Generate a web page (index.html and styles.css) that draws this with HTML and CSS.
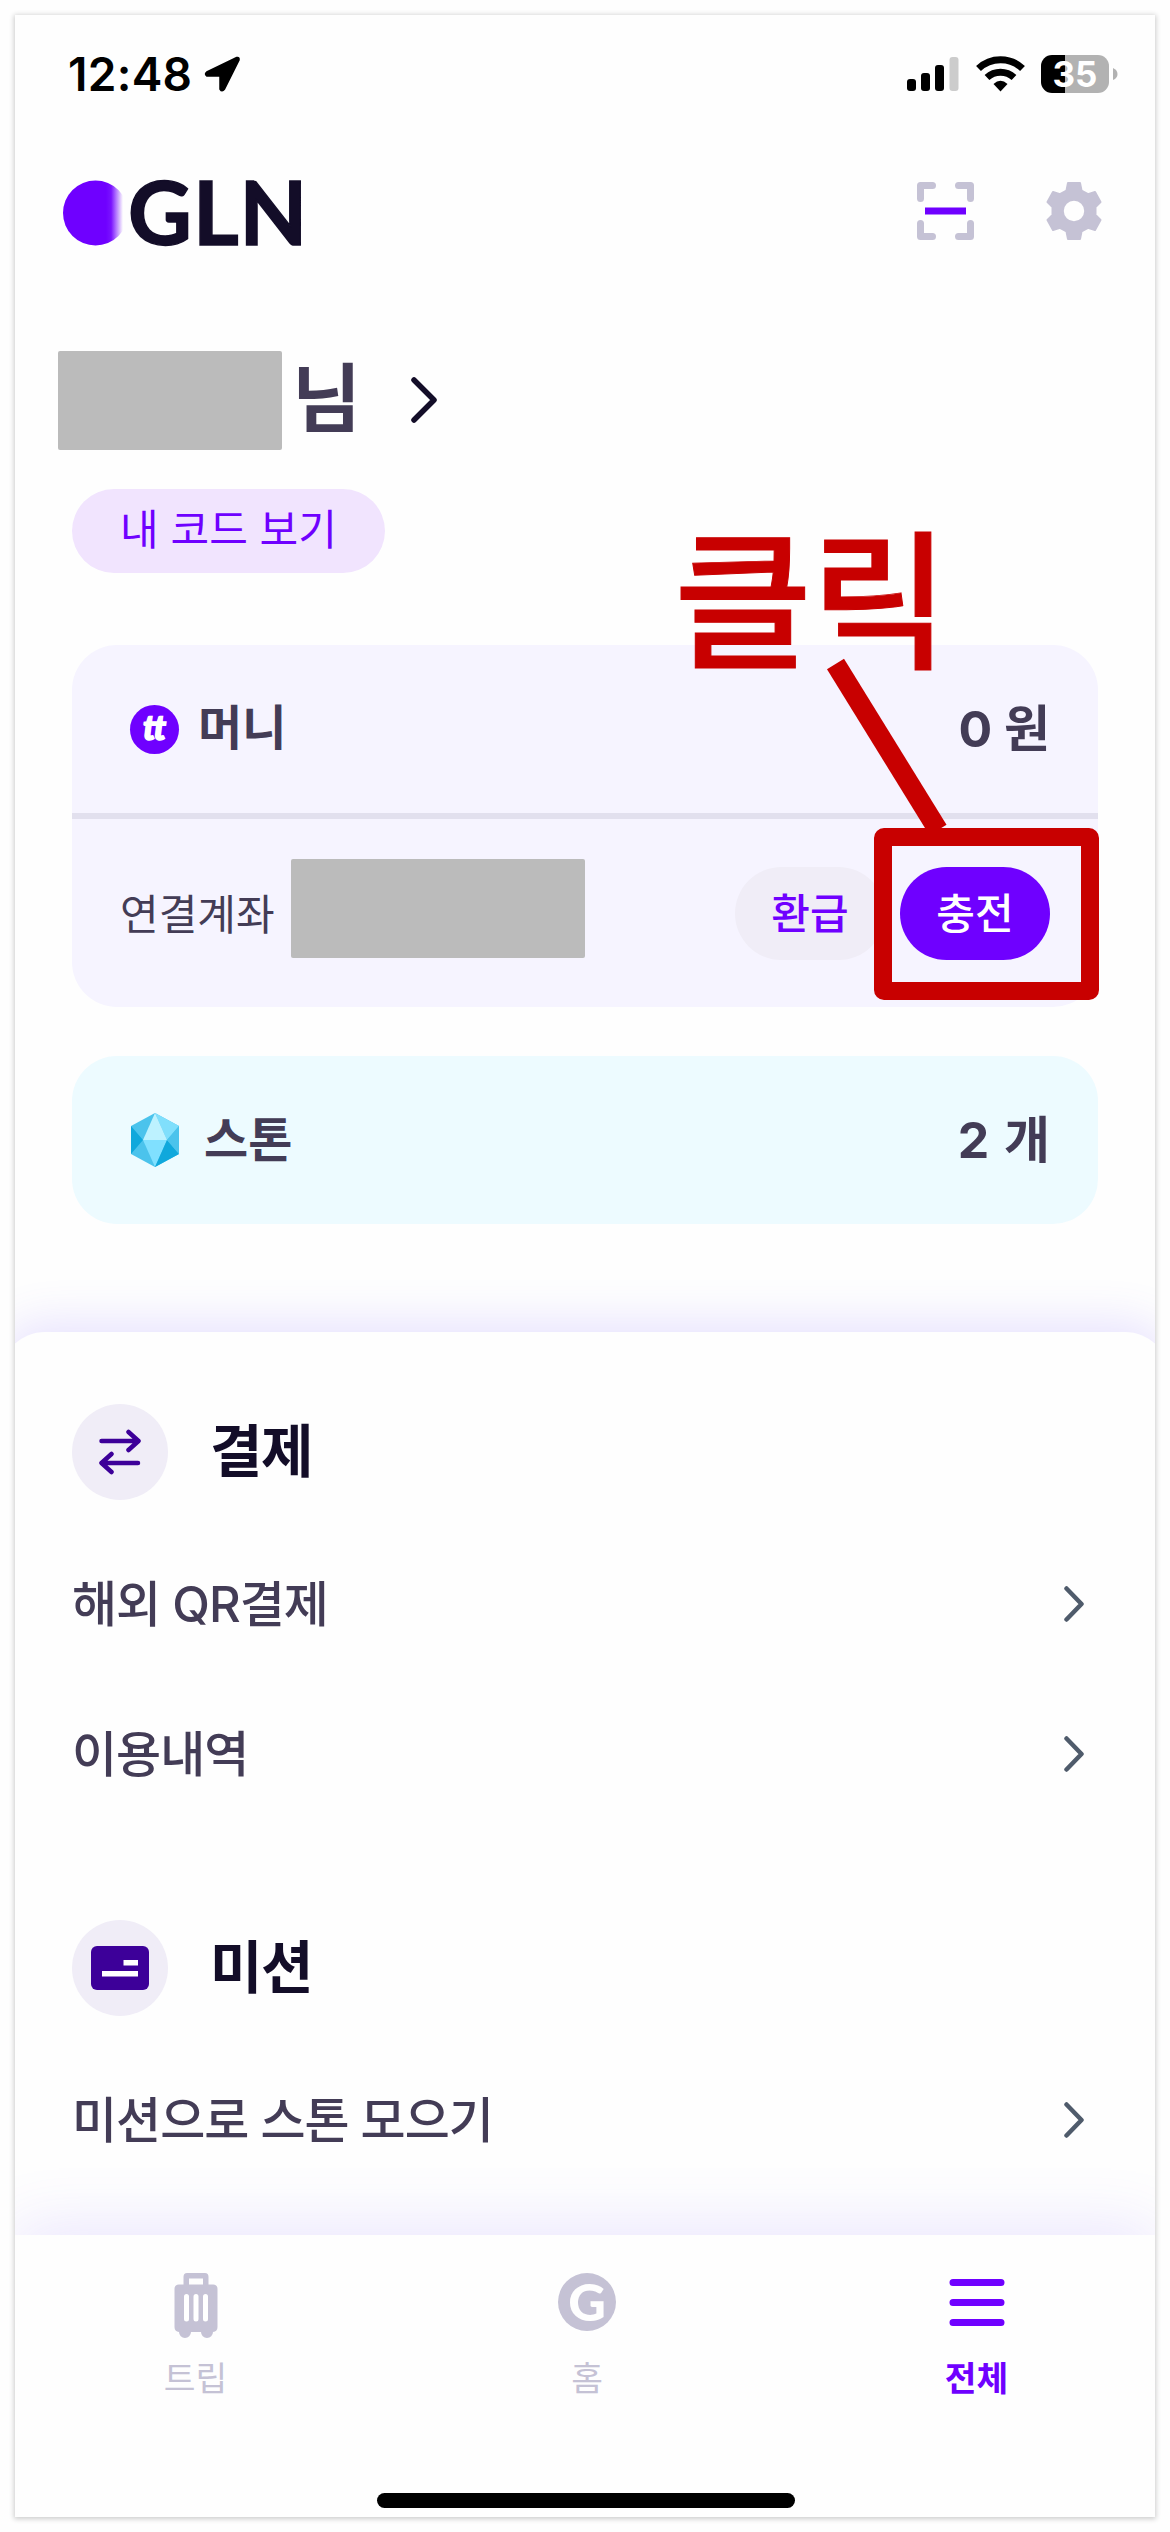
FILE: index.html
```html
<!DOCTYPE html>
<html lang="ko">
<head>
<meta charset="utf-8">
<title>GLN</title>
<link rel="stylesheet" href="styles.css">
</head>
<body>
<div class="screen">
  <div class="status">
    <div class="status-left">
      <span class="time">12:48</span>
      <svg class="location" width="37" height="37" viewBox="0 0 37 37"><path d="M33 2 3 16.500Q1 18 3 19.500H16.500V33Q18 35.500 20 33L34.500 4Q35 1.500 33 2Z" fill="#000" stroke="#000" stroke-width="2.500" stroke-linejoin="round"/></svg>
    </div>
    <div class="status-right">
      <svg width="52" height="38" viewBox="0 0 52 38"><rect y="24" width="9" height="12" rx="3"/><rect x="14" y="18" width="9" height="18" rx="3"/><rect x="28" y="10" width="9" height="26" rx="3"/><rect x="42.500" y="2" width="9" height="34" rx="3" fill="#ccc"/></svg>
      <svg width="49" height="38" viewBox="0 0 49 38"><g fill="none" stroke="#000" stroke-width="7"><path d="M2.500 13.500A32 32 0 0 1 46.500 13.500"/><path d="M11 22.500A20 20 0 0 1 38 22.500"/></g><path d="M17.500 29Q24.500 22.500 31.500 29L24.500 36.500Z"/></svg>
      <div class="battery"><div class="battery-body">35</div><svg width="5" height="12" viewBox="0 0 5 12"><path d="M0 0Q4.500 2 4.500 6T0 12Z" fill="#b2b2b2"/></svg></div>
    </div>
  </div>

  <header class="topbar">
    <div class="logo">
      <svg width="65" height="66" viewBox="0 0 65 66">
        <defs><linearGradient id="fade" gradientUnits="userSpaceOnUse" x1="43" y1="0" x2="60" y2="0"><stop offset="0" stop-color="#6f00ff"/><stop offset=".3" stop-color="#6f00ff" stop-opacity=".93"/><stop offset="1" stop-color="#6f00ff" stop-opacity="0"/></linearGradient></defs>
        <circle cx="32.500" cy="33" r="32.500" fill="url(#fade)"/>
      </svg>
      <span class="logo-text">GLN</span>
    </div>
    <div class="tools">
      <svg width="57" height="58" viewBox="0 0 57 58" fill="none" stroke-width="7"><path d="M3.500 16.500V3.500H15.500M41.500 3.500H53.500V16.500M53.500 41.500V54.500H41.500M15.500 54.500H3.500V41.500" stroke="#c5c2d5" stroke-linecap="round" stroke-linejoin="round"/><path d="M8 29H49" stroke="#6f00ff"/></svg>
      <svg width="56" height="58" viewBox="0 0 56 58"><path fill="#c5c2d5" stroke="#c5c2d5" stroke-width="2" stroke-linejoin="round" fill-rule="evenodd" d="M22 1H34L35.500 8.500 42 12.200 49 10 54.500 20 49.500 25V33L54.500 38 49 48 42 45.800 35.500 49.500 34 57H22L20.500 49.500 14 45.800 7 48 1.500 38 6.500 33V25L1.500 20 7 10 14 12.200 20.500 8.500ZM28 17.800A11.200 11.200 0 1 0 28 40.200 11.200 11.200 0 1 0 28 17.800Z"/></svg>
    </div>
  </header>

  <section class="profile">
    <div class="name-row">
      <div class="mask mask-name"></div>
      <span class="suffix">님</span>
      <svg width="28" height="48" viewBox="0 0 28 48"><path d="M4 3 24 23 4 43" class="chev chev-dark"/></svg>
    </div>
    <div class="code-pill">내 코드 보기</div>
  </section>

  <section class="card money">
    <div class="card-row">
      <span class="coin">tt</span>
      <span class="card-label">머니</span>
      <span class="amount">0 원</span>
    </div>
    <div class="account">
      <span class="account-label">연결계좌</span>
      <div class="mask mask-account"></div>
      <span class="btn btn-light">환급</span>
      <span class="btn btn-fill">충전</span>
    </div>
  </section>

  <section class="card stone">
    <div class="card-row">
      <svg width="50" height="56" viewBox="0 0 50 56"><path d="M25 1 49 14V42L25 55 1 42V14Z" fill="#4bc3ec"/><path d="M25 1 49 14 37 28Z" fill="#80dffc"/><path d="M25 1 37 28H13Z" fill="#bdf2ff"/><path d="M13 28H37L25 55Z" fill="#80e0ff"/><path d="M1 14 13 28 1 42ZM37 28 49 42 25 55Z" fill="#10a8dc"/><path d="M37 28 49 14V42Z" fill="#4bc3ec"/></svg>
      <span class="card-label">스톤</span>
      <span class="amount amount-stone">2 개</span>
    </div>
  </section>

  <main class="sheet">
    <div class="group-title">
      <span class="badge"><svg width="42" height="46" viewBox="0 0 42 46" fill="none" stroke="#3d0099" stroke-width="4.500" stroke-linecap="round" stroke-linejoin="round"><path d="M2.500 12H39M29.500 3 39.500 12 29.500 21M39 34H3M12.500 25 2.500 34 12.500 43"/></svg></span>
      <h2>결제</h2>
    </div>
    <div class="item"><span>해외 QR결제</span><svg width="20" height="36" viewBox="0 0 20 36"><path d="M2.500 2.500 17.500 18 2.500 33.500" class="chev"/></svg></div>
    <div class="item"><span>이용내역</span><svg width="20" height="36" viewBox="0 0 20 36"><path d="M2.500 2.500 17.500 18 2.500 33.500" class="chev"/></svg></div>
    <div class="group-title second">
      <span class="badge"><svg width="58" height="44" viewBox="0 0 58 44"><rect width="58" height="44" rx="6" fill="#3d0099"/><path d="M32.500 14H47V19.500H32.500ZM11 25H47V30.500H11Z" fill="#fff"/></svg></span>
      <h2>미션</h2>
    </div>
    <div class="item mission"><span>미션으로 스톤 모으기</span><svg width="20" height="36" viewBox="0 0 20 36"><path d="M2.500 2.500 17.500 18 2.500 33.500" class="chev"/></svg></div>
  </main>

  <nav class="tabs">
    <div class="tab"><svg width="44" height="66" viewBox="0 0 44 66"><path fill="#c5c2d5" fill-rule="evenodd" d="M9.500 11.500V4Q9.500 0 13 0H31Q34.500 0 34.500 4V11.500H39Q43.500 11.500 43.500 16V54Q43.500 58.500 39 59A6 6 0 0 1 27 59H17A6 6 0 0 1 5 59Q.5 58.500.5 54V16Q.5 11.500 5 11.500ZM15 5.500V11.500H29V5.500Z"/><path d="M12.500 23.500V46M22 23.500V46M31.500 23.500V46" stroke="#fff" stroke-width="5" stroke-linecap="round"/></svg><span>트립</span></div>
    <div class="tab"><div class="home-icon">G</div><span>홈</span></div>
    <div class="tab active"><svg width="56" height="66" viewBox="0 0 56 66"><path d="M4 9.500H52M4 29.500H52M4 49.500H52" stroke="#6f00ff" stroke-width="7" stroke-linecap="round"/></svg><span>전체</span></div>
    <div class="home-indicator"></div>
  </nav>

  <div class="callout">
    <span class="callout-text">클릭</span>
    <svg class="callout-line" width="140" height="190" viewBox="0 0 140 190"><path d="M14.500 14 117 180" stroke="#c80000" stroke-width="20"/></svg>
    <div class="callout-box"></div>
  </div>
</div>
</body>
</html>
```
FILE: styles.css
```css
* { box-sizing: border-box; }

body {
  margin: 0;
  width: 1170px;
  height: 2532px;
  padding: 15px 15px 0;
  background: #fefefe;
  font-family: Inter, "Noto Sans CJK KR", sans-serif;
  color: #433c56;
  overflow: hidden;
}

svg { display: block; flex: none; }

.screen {
  position: relative;
  width: 1140px;
  height: 2502px;
  display: flex;
  flex-direction: column;
  background: #fefefe;
  box-shadow: 0 1px 5px 1px rgba(0, 0, 0, .2);
  overflow: hidden;
}

.status {
  height: 119px;
  padding: 40px 37px 0 53px;
  display: flex;
  justify-content: space-between;
}
.status-left { display: flex; gap: 12px; height: 38px; align-items: center; }
.time { font-size: 46px; font-weight: 600; line-height: 38px; width: 124px; letter-spacing: .3px; color: #000; white-space: nowrap; }
.status-right { display: flex; gap: 16.5px; height: 38px; }
.battery { display: flex; align-items: center; gap: 4px; }
.battery-body {
  width: 68px;
  height: 38px;
  border-radius: 11px;
  background: linear-gradient(90deg, #000 24px, #b2b2b2 24px);
  color: #fff;
  font-size: 35px;
  font-weight: 700;
  line-height: 38px;
  text-align: center;
}

.topbar {
  height: 178px;
  padding: 44px 53px 0 48px;
  display: flex;
  justify-content: space-between;
}
.logo { display: flex; align-items: center; height: 70px; }
.logo-text {
  font-family: Lato, sans-serif;
  font-size: 88px;
  font-weight: 700;
  line-height: 106px;
  letter-spacing: 1px;
  padding-bottom: 4px;
  color: #130d28;
  -webkit-text-stroke: 1.5px #130d28;
}
.tools { display: flex; gap: 72px; padding-top: 4px; }

.profile { height: 333px; padding: 39px 43px 0; }
.name-row { display: flex; align-items: center; height: 99px; }
.mask { background: #bbb; border-radius: 2px; flex: none; }
.mask-name { width: 224px; height: 99px; }
.suffix { font-size: 75px; font-weight: 700; line-height: 95px; height: 99px; width: 73px; margin: 0 45px 0 10px; }
.chev { fill: none; stroke: #4f5b6b; stroke-width: 4.500px; stroke-linecap: round; stroke-linejoin: round; }
.chev-dark { stroke: #130d28; stroke-width: 5.500px; }
.code-pill {
  width: 313px;
  height: 84px;
  margin: 39px 0 0 14px;
  border-radius: 42px;
  background: #f1e4fe;
  color: #6f00ff;
  font-size: 42px;
  line-height: 81px;
  text-align: center;
}

.card { margin: 0 57px; border-radius: 45px; flex: none; }
.card-row { display: flex; align-items: center; height: 168px; padding: 0 48px 0 58px; }
.coin {
  width: 49px;
  height: 49px;
  border-radius: 50%;
  background: #6f00ff;
  color: #fff;
  font-family: Lato, sans-serif;
  font-size: 34px;
  font-weight: 900;
  font-style: italic;
  line-height: 44px;
  text-align: center;
  -webkit-text-stroke: 1.5px #fff;
}
.card-label { font-size: 48px; font-weight: 700; margin-left: 19px; line-height: 60px; }
.stone .card-label { margin-left: 24px; }
.amount { font-size: 50px; font-weight: 700; margin-left: auto; line-height: 60px; padding-bottom: 1px; }
.amount-stone { word-spacing: 3px; }
.money { height: 362px; background: #f6f4ff; }
.money .card-label { padding-bottom: 2px; }
.stone { height: 168px; margin-top: 49px; background: #edfbff; }
.account {
  display: flex;
  align-items: center;
  height: 194px;
  padding: 0 48px;
  border-top: 6px solid #e2e0ee;
}
.account-label { font-size: 42px; width: 171px; padding-bottom: 3px; white-space: nowrap; }
.mask-account { width: 294px; height: 99px; margin-bottom: 10px; }
.btn {
  width: 150px;
  height: 93px;
  border-radius: 46.500px;
  font-size: 42px;
  font-weight: 500;
  line-height: 93px;
  text-align: center;
}
.btn-light { margin: 0 15px 0 auto; background: #f0edf7; color: #6f00ff; }
.btn-fill { background: #6f00ff; color: #fff; }

.sheet {
  flex: 1;
  margin: 108px -15px 0;
  padding: 72px 86px 0 72px;
  border-radius: 45px 45px 0 0;
  background: #fefefe;
  box-shadow: 0 -10px 45px rgba(111, 80, 255, .16);
}
.group-title { display: flex; align-items: center; gap: 42px; height: 96px; }
.group-title h2 { margin: 0; font-size: 57px; font-weight: 700; line-height: 80px; color: #130d28; letter-spacing: -1.5px; }
.badge { width: 96px; height: 96px; border-radius: 50%; background: #f0edf7; display: flex; align-items: center; justify-content: center; }
.group-title + .item { margin-top: 29px; }
.item { display: flex; align-items: center; justify-content: space-between; height: 150px; font-size: 49px; font-weight: 500; letter-spacing: -1px; }
.item span { padding-bottom: 7px; }
.second { margin-top: 91px; }
.group-title + .item.mission { margin-top: 29px; }

.tabs {
  position: relative;
  height: 282px;
  padding-top: 38px;
  display: grid;
  grid-template-columns: 361px 1fr 357px;
  flex: none;
  background: #fefefe;
  box-shadow: 0 -8px 60px rgba(111, 80, 255, .14);
}
.tab { display: flex; flex-direction: column; align-items: center; color: #c5c2d5; font-size: 34.5px; line-height: 40px; gap: 20px; }
.active { color: #6f00ff; font-weight: 700; }
.home-icon {
  width: 58px;
  height: 58px;
  margin-bottom: 8px;
  border-radius: 50%;
  background: #c5c2d5;
  font-family: Lato, sans-serif;
  font-size: 52px;
  font-weight: 900;
  line-height: 57px;
  text-align: center;
  color: #fefefe;
}
.home-indicator { position: absolute; left: 362px; bottom: 9px; width: 418px; height: 15px; border-radius: 8px; background: #000; }

.callout { position: absolute; left: 655px; top: 500px; width: 440px; height: 500px; }
.callout-text {
  position: absolute;
  left: 4px;
  top: 3px;
  font-size: 150px;
  font-weight: 500;
  line-height: 170px;
  color: #c80000;
  -webkit-text-stroke: 1px #c80000;
  white-space: nowrap;
  letter-spacing: -1px;
}
.callout-line { position: absolute; left: 151px; top: 135px; }
.callout-box { position: absolute; left: 204px; top: 313px; width: 225px; height: 172px; border: 18px solid #c80000; border-radius: 10px; }
```
